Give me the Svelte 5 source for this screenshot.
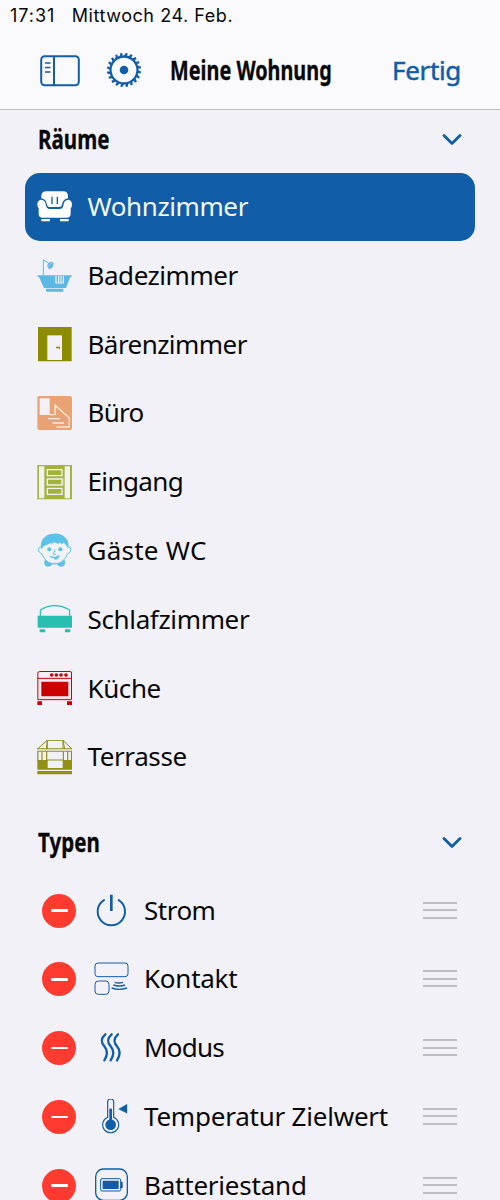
<script lang="ts">
  type Room = { name: string; icon: string; color: string; spacing: number };
  type Kind = { name: string; icon: string; spacing: number };

  const rooms: Room[] = [
    { name: "Wohnzimmer", icon: "sofa", color: "#ffffff", spacing: -0.4 },
    { name: "Badezimmer", icon: "bath", color: "#5cb8e4", spacing: -0.45 },
    { name: "Bärenzimmer", icon: "door", color: "#8c8c00", spacing: -0.55 },
    { name: "Büro", icon: "stairs", color: "#e9a274", spacing: -0.7 },
    { name: "Eingang", icon: "entry", color: "#a3b33c", spacing: -0.6 },
    { name: "Gäste WC", icon: "face", color: "#5bc3e8", spacing: 0.25 },
    { name: "Schlafzimmer", icon: "bed", color: "#26bfb0", spacing: -0.35 },
    { name: "Küche", icon: "oven", color: "#cc0000", spacing: -0.4 },
    { name: "Terrasse", icon: "pavilion", color: "#8f9014", spacing: -0.4 },
  ];

  const kinds: Kind[] = [
    { name: "Strom", icon: "power", spacing: -0.5 },
    { name: "Kontakt", icon: "contact", spacing: -0.25 },
    { name: "Modus", icon: "heat", spacing: -0.75 },
    { name: "Temperatur Zielwert", icon: "thermometer", spacing: -0.22 },
    { name: "Batteriestand", icon: "battery", spacing: -0.22 },
  ];

  let selected = $state("Wohnzimmer");
</script>

{#snippet chevron()}
  <svg class="chevron" viewBox="0 0 20 12">
    <path d="M2 2.500l8 8 8-8" />
  </svg>
{/snippet}

{#snippet roomIcon(icon: string)}
  <svg class="icon" viewBox="0 0 105 105" fill="currentColor">
    {#if icon === "sofa"}
      <path d="M13 28V22Q13 7 28 7H78Q93 7 93 22V28Q77 31 75 47Q74 54 66 54H40Q31 54 30 47Q28 31 13 28Z" />
      <path d="M12 32Q24 33 26 45Q27 60 39 60H67Q79 60 80 45Q82 33 94 32Q105 34 105 46Q105 54 101 58V74Q101 86 89 86H17Q5 86 5 74V58Q1 54 1 46Q1 34 12 32Z" />
      <path d="M13 90h26v7h-26zM69 90h26v7h-26z" />
      <path d="M45 23v22M61 23v22" stroke="#115da8" stroke-width="4" />
    {:else if icon === "bath"}
      <path d="M2 52H104V57H100L87 90H21L6 57H2ZM27 92H79V101H27Z" />
      <path d="M19 52V6L34 14" fill="none" stroke="currentColor" stroke-width="3" />
      <path d="M31 25Q30 12 45 11L50 15Q49 32 37 33Q33 31 31 25Z" />
      <path d="M32 27l15-15" stroke="#f2f1f7" stroke-width="1.500" />
      <path d="M57 53V75H79V53M65 53V74M72 53V74" fill="none" stroke="#f2f1f7" stroke-width="3.500" />
    {:else if icon === "door"}
      <path d="M3 0H104V103H3Z" />
      <path d="M31 25H75V99H31Z" fill="#f2f1f7" />
      <path d="M57 59h12v9l-3-4h-9z" />
    {:else if icon === "stairs"}
      <rect x="1" y="0" width="104" height="102" rx="6" />
      <path d="M8 7H38V57H8Z" fill="#f2f1f7" />
      <path d="M36 56H54V28L97 66V93H58M33 68H69M46 81H81" fill="none" stroke="#f8e9df" stroke-width="4" />
    {:else if icon === "entry"}
      <path d="M1 0H105V103H1Z" />
      <path d="M6 4H22V100H6ZM83 4H99V100H83Z" fill="#f2f1f7" />
      <path d="M31 14H75V32H31ZM31 42H75V60H31ZM31 70H75V88H31Z" fill="none" stroke="#f2f1f7" stroke-width="4" />
      <path d="M78 38V62" stroke="#f2f1f7" stroke-width="2" />
    {:else if icon === "face"}
      <path d="M29 79Q19 82 22 93Q24 101 32 101Q42 102 46 94H60Q64 102 74 101Q82 101 84 93Q87 82 77 79Q67 89 53 90Q38 88 29 79Z" />
      <path d="M13 42Q4 42 4 50Q5 59 15 63Q24 86 42 91Q53 94 64 91Q84 84 91 63Q101 59 102 50Q102 42 93 42" fill="#f2f1f7" stroke="currentColor" stroke-width="3" />
      <path d="M12 46Q9 22 24 11Q34 2 50 2Q72 0 85 14Q98 26 94 46L86 35L79 28L77 34L66 28L65 33L51 28L42 35L44 29L27 37Q17 39 16 47Z" />
      <circle cx="37" cy="49" r="6" />
      <circle cx="70" cy="49" r="6" />
      <path d="M54 50L49 64H57" fill="none" stroke="currentColor" stroke-width="3" />
      <path d="M38 70Q55 77 67 67Q65 80 53 79Q57 76 49 75Z" stroke="currentColor" stroke-width="2" />
    {:else if icon === "bed"}
      <path d="M2 41H105V77H2ZM8 82H24V91H8ZM84 82H100V91H84Z" />
      <path d="M10 42V24Q31 11 53 11Q76 11 98 24V42" fill="none" stroke="currentColor" stroke-width="3.500" stroke-linejoin="round" />
    {:else if icon === "oven"}
      <path d="M2.500 86V6Q3 1.500 8 1.500H99Q103.500 2 103.500 6V86ZM2 22H104" fill="none" stroke="currentColor" stroke-width="3" />
      <path d="M13 32H94V76H13ZM1 91H15V102H1ZM90 91H105V102H90Z" />
      <path d="M8 26H99V82H8Z" fill="none" stroke="currentColor" stroke-opacity="0.25" stroke-width="1" />
      {#each [44, 58, 72, 87] as x}
        <circle cx={x} cy="12" r="5.500" />
      {/each}
    {:else}
      <path d="M1 27L31 1H78L105 27M31 1V27M78 1V27M31 1L28 27M78 1L83 27" fill="none" stroke="currentColor" stroke-width="3" />
      <path d="M1 25H105V28H1ZM1 32H105V35H1ZM1 60H32V86H1ZM77 60H105V86H77ZM1 84H105V89H1ZM1 93H105V103H1Z" />
      <path d="M2.500 34V62M15 34V62M29 34V62M79 34V62M92 34V62M103.500 34V62M30 60H79" fill="none" stroke="currentColor" stroke-width="3.500" />
    {/if}
  </svg>
{/snippet}

{#snippet kindIcon(icon: string)}
  <svg class="icon kind-icon" viewBox="0 0 105 105" fill="none" stroke="currentColor">
    {#if icon === "power"}
      <path d="M32 20A41 41 0 1 0 72 20" stroke-width="6" />
      <path d="M52 5V54" stroke-width="8" />
    {:else if icon === "contact"}
      <rect x="3" y="3" width="99" height="41" rx="9" stroke-width="3" />
      <rect x="3" y="57" width="42" height="40" rx="10" stroke-width="3" />
      <path d="M62 61Q75 65 87 61M58 69Q75 75 93 69M53 78Q75 86 99 78" stroke-width="4" />
    {:else if icon === "heat"}
      {#each [0, 19, 38] as x}
        <path d="M{x + 34} 10C{x + 18} 24 {x + 22} 35 {x + 31} 46S{x + 43} 70 {x + 31} 88" stroke-width="7" stroke-linecap="round" />
      {/each}
    {:else if icon === "thermometer"}
      <path d="M41 55V9A9 9 0 0 1 59 9V55A24 24 0 1 1 41 55Z" stroke-width="3.500" />
      <circle cx="50" cy="77" r="16" fill="currentColor" stroke="none" />
      <path d="M50 29V70" stroke-width="8" />
      <path d="M74 30L99 16V43Z" fill="currentColor" stroke-width="1" />
    {:else}
      <rect x="5" y="3" width="95" height="94" rx="23" stroke-width="4" />
      <rect x="20" y="32" width="60" height="37" rx="4" stroke-width="3" />
      <path d="M26 38H74V63H26ZM80 41H86V60H80Z" fill="currentColor" stroke="none" />
    {/if}
  </svg>
{/snippet}

<main>
  <header>
    <div class="status">
      <span class="time">17:31</span>
      <span class="date">Mittwoch 24. Feb.</span>
    </div>
    <nav>
      <button class="sidebar-button" aria-label="Seitenleiste">
        <svg width="40" height="32" viewBox="0 0 40 32" fill="none" stroke="currentColor" stroke-width="2">
          <rect x="1.200" y="1.200" width="37.600" height="29" rx="3.500" />
          <path d="M14 1V30" />
          <path d="M5 8h5.500M5 12.500h5.500M5 17h5.500" stroke-width="1.500" />
        </svg>
      </button>
      <button class="gear-button" aria-label="Einstellungen">
        <svg width="36" height="36" viewBox="-18 -17 36 36" fill="none" stroke="currentColor">
          <circle r="13.500" stroke-width="2.300" />
          <circle r="4.300" fill="currentColor" stroke="none" />
          {#each { length: 20 } as _, i}
            <path d="M-0.500 -14L0.800 -17" stroke-width="2.300" transform="rotate({i * 18 + 7})" />
          {/each}
        </svg>
      </button>
      <h1><span>Meine Wohnung</span></h1>
      <button class="done">Fertig</button>
    </nav>
  </header>

  <section>
    <h2><span>Räume</span>{@render chevron()}</h2>
    <ul>
      {#each rooms as room}
        <li>
          <button
            class="room"
            class:selected={room.name === selected}
            onclick={() => (selected = room.name)}
          >
            <span class="room-icon" style="color: {room.color}">{@render roomIcon(room.icon)}</span>
            <span class="label" style="letter-spacing: {room.spacing}px">{room.name}</span>
          </button>
        </li>
      {/each}
    </ul>
  </section>

  <section>
    <h2><span>Typen</span>{@render chevron()}</h2>
    <ul>
      {#each kinds as kind}
        <li class="kind">
          <button class="remove" aria-label="Entfernen"><i></i></button>
          {@render kindIcon(kind.icon)}
          <span class="label" style="letter-spacing: {kind.spacing}px">{kind.name}</span>
          <span class="handle"><i></i><i></i><i></i></span>
        </li>
      {/each}
    </ul>
  </section>
</main>

<style>
  :global(body) {
    margin: 0;
    overflow: hidden;
    background: #f2f1f7;
  }
  main {
    height: 1200px;
    overflow: hidden;
    box-sizing: border-box;
    background: #f2f1f7;
    color: #08080a;
    font-family: "Noto Sans", sans-serif;
  }
  button {
    padding: 0;
    border: 0;
    background: none;
    color: inherit;
    font: inherit;
  }
  svg {
    display: block;
    flex: none;
  }
  header {
    height: 110px;
    box-sizing: border-box;
    border-bottom: 1px solid #b9b9be;
    background: #fafafd;
  }
  .status {
    display: flex;
    gap: 16.5px;
    height: 31px;
    padding-left: 10px;
    align-items: center;
    font: 18px/31px Inter, sans-serif;
    letter-spacing: 0.55px;
  }
  .time {
    letter-spacing: 0.95px;
  }
  nav {
    display: flex;
    align-items: center;
    height: 79px;
    padding: 0 39px 0 40px;
    color: #115da8;
  }
  .gear-button {
    margin-left: 26px;
  }
  h1,
  h2 {
    margin: 0;
    color: #08080a;
    font-size: 26px;
    font-weight: 700;
    white-space: nowrap;
  }
  /* condensed look for the headings */
  h1 span,
  h2 span {
    display: block;
    transform: scaleX(0.79);
    transform-origin: left;
    -webkit-text-stroke: 0.3px;
  }
  h1 {
    width: 161px;
    margin: -2px 0 0 28px;
  }
  h1 span {
    transform: scaleX(0.763);
  }
  .done {
    margin: -2px 0 0 auto;
    font-size: 26px;
    letter-spacing: -0.35px;
    -webkit-text-stroke: 0.5px;
  }
  h2 {
    display: flex;
    align-items: center;
    justify-content: space-between;
    height: 57.8px;
    padding: 0 38.5px 5px 37.5px;
  }
  .chevron {
    width: 20px;
    height: 12px;
    fill: none;
    stroke: #115da8;
    stroke-width: 2.8;
    stroke-linecap: round;
    stroke-linejoin: round;
  }
  section + section {
    margin-top: 21.4px;
  }
  ul {
    margin: 0;
    padding: 0 25px;
    list-style: none;
  }
  li {
    height: 68.8px;
  }
  .room {
    display: flex;
    align-items: center;
    gap: 15.5px;
    width: 100%;
    height: 68.4px;
    padding-left: 12px;
    border-radius: 15px;
  }
  .selected {
    background: #115da8;
    color: #f4f8fc;
  }
  .icon {
    width: 35px;
    height: 35px;
  }
  .label {
    margin-top: -2px;
    font-size: 26px;
    line-height: 34px;
    white-space: nowrap;
  }
  .kind {
    display: flex;
    align-items: center;
    padding: 0 18px 0 17px;
  }
  .remove {
    display: grid;
    place-items: center;
    width: 34px;
    height: 34px;
    border-radius: 50%;
    background: #ff3b30;
  }
  .remove i {
    width: 17px;
    height: 2.5px;
    border-radius: 1px;
    background: white;
  }
  .kind-icon {
    margin: 0 15.5px 0 17.5px;
    color: #115da8;
  }
  .handle {
    display: grid;
    gap: 5.5px;
    width: 34px;
    margin: -1px 0 0 auto;
  }
  .handle i {
    height: 2px;
    background: #bebdc3;
  }
</style>
